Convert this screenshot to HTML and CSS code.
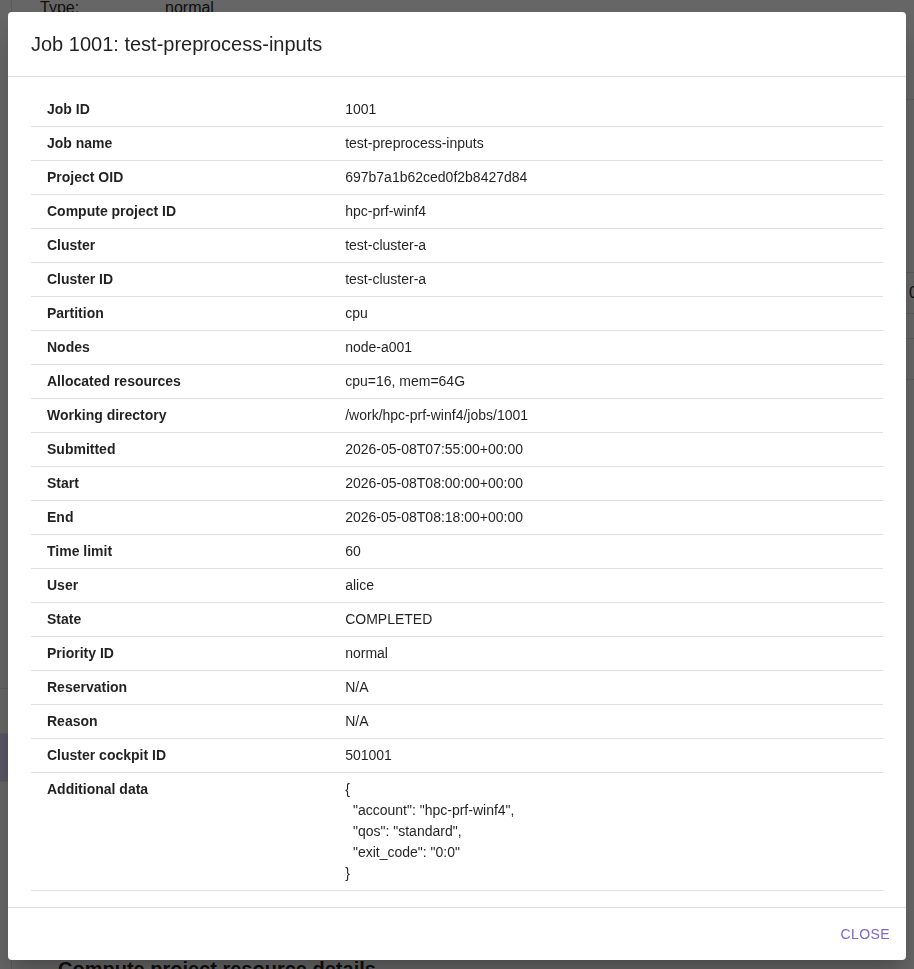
FILE: index.html
```html
<!DOCTYPE html>
<html>

<head>
  <title>Job 1001</title>
  <link rel="stylesheet" href="styles.css">
</head>

<body>
  <div class="page">
    <div class="sidebar">
      <div class="nav-item"></div>
      <div class="nav-item"></div>
      <div class="nav-item active"></div>
    </div>
    <div class="main">
      <div class="info-row">
        <span class="info-label">Type:</span>
        <span class="info-value">normal</span>
      </div>
      <div class="bg-table">
        <div class="bg-row"><span class="bg-cell">0</span></div>
        <div class="bg-row"></div>
        <div class="bg-row"></div>
      </div>
      <h3 class="bg-heading">Compute project resource details</h3>
    </div>
  </div>

  <div class="backdrop">
    <div class="dialog">
      <h2 class="dialog-title">Job 1001: test-preprocess-inputs</h2>
      <div class="dialog-content">
        <table class="details">
          <tbody>
            <tr><th>Job ID</th><td>1001</td></tr>
            <tr><th>Job name</th><td>test-preprocess-inputs</td></tr>
            <tr><th>Project OID</th><td>697b7a1b62ced0f2b8427d84</td></tr>
            <tr><th>Compute project ID</th><td>hpc-prf-winf4</td></tr>
            <tr><th>Cluster</th><td>test-cluster-a</td></tr>
            <tr><th>Cluster ID</th><td>test-cluster-a</td></tr>
            <tr><th>Partition</th><td>cpu</td></tr>
            <tr><th>Nodes</th><td>node-a001</td></tr>
            <tr><th>Allocated resources</th><td>cpu=16, mem=64G</td></tr>
            <tr><th>Working directory</th><td>/work/hpc-prf-winf4/jobs/1001</td></tr>
            <tr><th>Submitted</th><td>2026-05-08T07:55:00+00:00</td></tr>
            <tr><th>Start</th><td>2026-05-08T08:00:00+00:00</td></tr>
            <tr><th>End</th><td>2026-05-08T08:18:00+00:00</td></tr>
            <tr><th>Time limit</th><td>60</td></tr>
            <tr><th>User</th><td>alice</td></tr>
            <tr><th>State</th><td>COMPLETED</td></tr>
            <tr><th>Priority ID</th><td>normal</td></tr>
            <tr><th>Reservation</th><td>N/A</td></tr>
            <tr><th>Reason</th><td>N/A</td></tr>
            <tr><th>Cluster cockpit ID</th><td>501001</td></tr>
            <tr><th>Additional data</th><td class="json">{
  "account": "hpc-prf-winf4",
  "qos": "standard",
  "exit_code": "0:0"
}</td></tr>
          </tbody>
        </table>
      </div>
      <div class="dialog-actions">
        <button class="close-button">Close</button>
      </div>
    </div>
  </div>
</body>

</html>
```

FILE: styles.css
```css
body {
  margin: 0;
  padding: 0;
  background-color: #ffffff;
  font-family: "Liberation Sans", Arial, sans-serif;
  color: rgba(0, 0, 0, 0.87);
  overflow: hidden;
}

/* page behind the dialog */
.page {
  display: flex;
  height: 100vh;
}

.sidebar {
  width: 11px;
  border-right: 1px solid #e0e0e0;
  padding-top: 644px;
}

.nav-item {
  height: 44px;
  border-bottom: 1px solid #e8e8e8;
}

.nav-item.active {
  background-color: #dcd4ff;
  height: 47px;
}

.main {
  flex: 1;
  display: flex;
  flex-direction: column;
  padding-left: 28px;
}

.info-row {
  display: flex;
  font-size: 16px;
  line-height: 20px;
  margin-top: -2px;
  padding-bottom: 81px;
  border-bottom: 1px solid #e0e0e0;
}

.info-label {
  width: 125px;
}

.bg-table {
  margin-top: 172px;
  border-top: 1px solid #e0e0e0;
}

.bg-row {
  height: 40px;
  border-bottom: 1px solid #e0e0e0;
  display: flex;
  justify-content: flex-end;
  align-items: center;
  font-size: 16px;
}

.bg-row:nth-child(2) {
  height: 24px;
}

.bg-cell {
  margin-right: -4px;
}

.bg-heading {
  margin: auto 0 -12px 18px;
  font-size: 20px;
}

/* dialog */
.backdrop {
  position: fixed;
  top: 0;
  left: 0;
  right: 0;
  bottom: 0;
  background-color: rgba(0, 0, 0, 0.6);
  display: flex;
  padding: 12px 8px 9px 8px;
}

.dialog {
  flex: 1;
  display: flex;
  flex-direction: column;
  background-color: #ffffff;
  border-radius: 4px;
  box-shadow: 0 11px 15px -7px rgba(0, 0, 0, 0.2), 0 24px 38px 3px rgba(0, 0, 0, 0.14);
}

.dialog-title {
  margin: 0;
  padding: 16px 23px;
  font-size: 20px;
  font-weight: normal;
  line-height: 32px;
}

.dialog-content {
  flex: 1;
  padding: 16px 23px;
  border-top: 1px solid #e0e0e0;
  border-bottom: 1px solid #e0e0e0;
}

.details {
  width: 100%;
  border-collapse: collapse;
  font-size: 14px;
  line-height: 21px;
}

.details th,
.details td {
  padding: 6px 16px;
  border-bottom: 1px solid #e0e0e0;
  text-align: left;
  vertical-align: top;
}

.details th {
  width: 35%;
  font-weight: bold;
}

.details .json {
  white-space: pre-wrap;
}

.dialog-actions {
  display: flex;
  justify-content: flex-end;
  padding: 8px;
}

.close-button {
  background: none;
  border: none;
  padding: 6px 8px;
  font-family: "Liberation Sans", Arial, sans-serif;
  font-size: 14px;
  line-height: 24px;
  letter-spacing: 0.4px;
  text-transform: uppercase;
  color: #7b68c8;
  cursor: pointer;
  border-radius: 4px;
}
```
